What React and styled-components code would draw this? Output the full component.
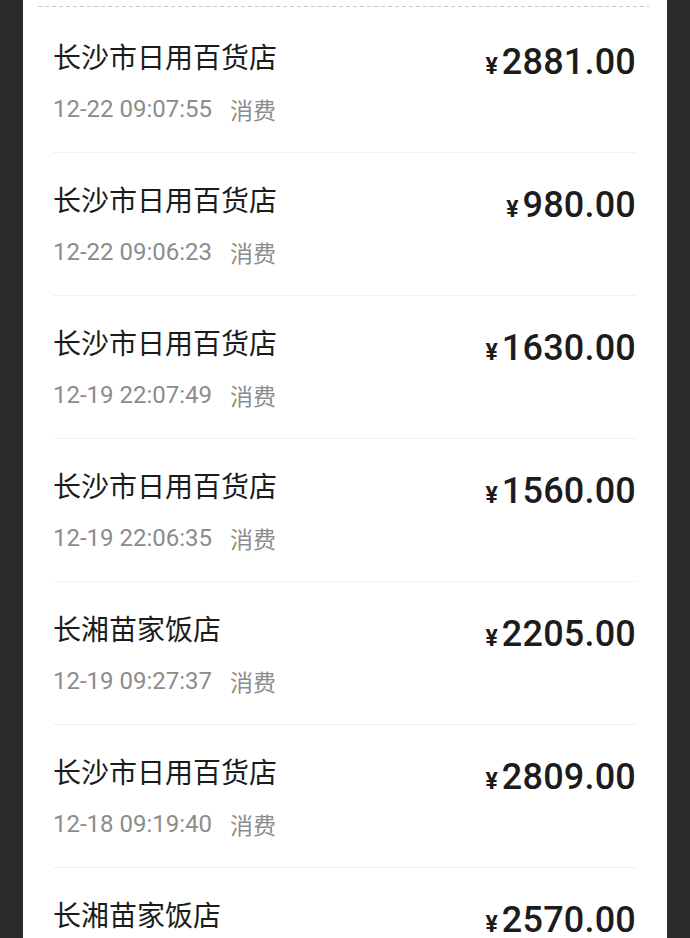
import React from "react";
import styled, { createGlobalStyle } from "styled-components";

const GlobalStyle = createGlobalStyle`
  html, body {
    margin: 0;
    padding: 0;
    background: #2b2b2b;
  }
  body {
    font-family: Roboto, "Noto Sans CJK SC", sans-serif;
  }
`;

const Page = styled.div`
  padding: 0 23px;
`;

const Card = styled.section`
  background: #ffffff;
  padding: 6px 31px 0 30px;
  min-height: 100vh;
  box-sizing: border-box;
`;

const Dashed = styled.div`
  height: 1px;
  margin: 0 -13px 3px -15px;
  background: repeating-linear-gradient(
    to right,
    #c9c9c9 0,
    #c9c9c9 4px,
    transparent 4px,
    transparent 7px
  );
`;

const Row = styled.div`
  display: flex;
  justify-content: space-between;
  align-items: flex-start;
  padding: 28px 0 28px;
  border-bottom: 1px solid #f1f1f1;
`;

const Left = styled.div`
  display: flex;
  flex-direction: column;
`;

const Title = styled.div`
  height: 36px;
  line-height: 36px;
  font-family: "Noto Sans CJK SC", sans-serif;
  font-size: 28px;
  color: #1c1c1c;
`;

const Meta = styled.div`
  display: flex;
  align-items: center;
  height: 30px;
  margin-top: 20px;
  color: #8c8c8c;
`;

const Time = styled.span`
  font-family: Roboto, sans-serif;
  font-size: 24px;
  line-height: 30px;
`;

const Kind = styled.span`
  margin-left: 18px;
  font-family: "Noto Sans CJK SC", sans-serif;
  font-size: 23px;
  line-height: 30px;
`;

const Amount = styled.div`
  display: flex;
  align-items: baseline;
  height: 44px;
  margin-top: 2px;
  color: #1c1c1c;
`;

const Yen = styled.span`
  font-family: Roboto, sans-serif;
  font-weight: 700;
  font-size: 23px;
  line-height: 44px;
  margin-right: 4px;
`;

const Value = styled.span`
  font-family: Roboto, sans-serif;
  font-weight: 500;
  font-size: 36px;
  line-height: 44px;
  letter-spacing: 0.2px;
`;

const records = [
  { name: "长沙市日用百货店", time: "12-22 09:07:55", amount: "2881.00" },
  { name: "长沙市日用百货店", time: "12-22 09:06:23", amount: "980.00" },
  { name: "长沙市日用百货店", time: "12-19 22:07:49", amount: "1630.00" },
  { name: "长沙市日用百货店", time: "12-19 22:06:35", amount: "1560.00" },
  { name: "长湘苗家饭店", time: "12-19 09:27:37", amount: "2205.00" },
  { name: "长沙市日用百货店", time: "12-18 09:19:40", amount: "2809.00" },
  { name: "长湘苗家饭店", time: "12-18 08:42:16", amount: "2570.00" },
];

export default function App() {
  return (
    <Page>
      <GlobalStyle />
      <Card>
        <Dashed />
        {records.map((r, i) => (
          <Row key={i}>
            <Left>
              <Title>{r.name}</Title>
              <Meta>
                <Time>{r.time}</Time>
                <Kind>消费</Kind>
              </Meta>
            </Left>
            <Amount>
              <Yen>¥</Yen>
              <Value>{r.amount}</Value>
            </Amount>
          </Row>
        ))}
      </Card>
    </Page>
  );
}
